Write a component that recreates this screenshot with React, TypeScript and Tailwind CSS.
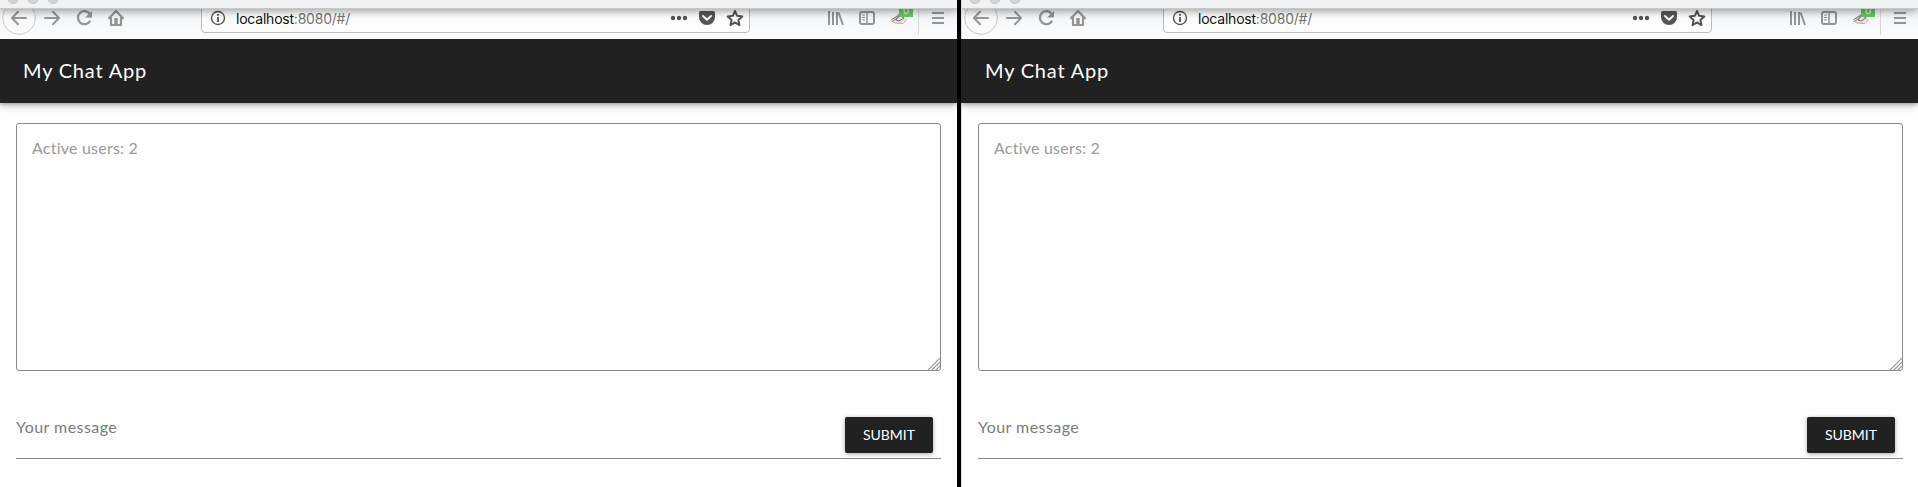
import React from "react";

const glyph = "block shrink-0";

function Toolbar() {
  return (
    <div className="relative h-[39px] w-full shrink-0 overflow-hidden bg-linear-to-b from-[#eff2f4] to-[#fbfcfd]">
      <div className="relative z-10 flex h-[9px] w-full gap-[8px] border-b border-[#c6c8c9] bg-[#f0f2f4] pl-[7px] shadow-[0_2px_8px_rgba(0,0,0,0.4)]">
        <i className="-mt-[8px] block size-[12px] rounded-full border border-[#c4c4c4] bg-[#d5d5d5]" />
        <i className="-mt-[8px] block size-[12px] rounded-full border border-[#c4c4c4] bg-[#d5d5d5]" />
        <i className="-mt-[8px] block size-[12px] rounded-full border border-[#c4c4c4] bg-[#d5d5d5]" />
      </div>
      <div className="-mt-[9px] flex h-[39px] w-[957px]">
        <svg className={glyph} width="201" height="39" viewBox="0 0 201 39" fill="none" stroke="#959595" strokeWidth="2" strokeLinecap="round" strokeLinejoin="round">
          <circle cx="19" cy="18" r="16.3" fill="#fafafa" stroke="#c9c9c9" strokeWidth="1" />
          <path d="M26 18H12.500M18 11.800L12 18l6 6.200M45 18h13.500M53 11.800l6 6.200-6 6.200" />
          <path d="M90 14.300a6.500 6.500 0 1 0 .2 6.400" strokeLinecap="butt" strokeWidth="2.300" />
          <path d="M92 11v6.500h-7z" fill="#959595" stroke="none" />
          <path d="M109 18.300L116 11l7 7.300M111 17v8h10v-8" strokeWidth="2.200" />
          <path d="M116 18v6" strokeWidth="3.500" strokeLinecap="butt" />
        </svg>
        <div className="flex h-[33px] w-[549px] shrink-0 items-center rounded-[4px] border border-[#bcbcbc] bg-[#fdfdfd]">
          <svg className={glyph} width="33" height="33" viewBox="202 0 33 33" fill="none" stroke="#4b4b4b">
            <circle cx="218" cy="18" r="6.500" strokeWidth="1.300" />
            <path d="M218 17v5M218 14v1.700" strokeWidth="1.700" />
          </svg>
          <span className="mt-[5px] w-[430px] pl-px font-['Inter',sans-serif] text-[14px] leading-[18px] tracking-[-0.22px] text-[#737373]"><span className="text-[#111]">localhost</span>:8080/#/</span>
          <svg className={glyph} width="84" height="33" viewBox="665 0 84 33" fill="#555">
            <circle cx="673" cy="18" r="2.200" /><circle cx="679" cy="18" r="2.200" /><circle cx="685" cy="18" r="2.200" />
            <path d="M700.500 11h13q1.500 0 1.500 1.500v4.500a8 8 0 0 1-16 0v-4.500q0-1.500 1.500-1.500z" />
            <path d="M703 16l4 3.700 4-3.700" fill="none" stroke="#fff" strokeWidth="2" strokeLinecap="round" strokeLinejoin="round" />
            <path d="M735 11l2.100 4.800 5.200.6-3.900 3.500 1.100 5.200-4.500-2.700-4.500 2.700 1.100-5.200-3.900-3.500 5.200-.6z" fill="none" stroke="#555" strokeWidth="2" strokeLinejoin="round" />
          </svg>
        </div>
        <svg className={glyph} width="207" height="39" viewBox="750 0 207 39" fill="none" stroke="#959595" strokeWidth="2">
          <path d="M829 11v14M833 12v13M837 12v13M838.500 12.500L843 25" />
          <rect x="860" y="12" width="14" height="12" rx="2" />
          <path d="M867 12v12" strokeWidth="1.500" /><path d="M862 15h3M862 17.500h3M862 20h3" strokeWidth="1" />
          <path d="M891 20.500l8-8.500 6 4 1 4-7 4z" fill="#e7e2da" stroke="none" />
          <path d="M891.500 19.500l7-4 3-4M893 21l7-5M896 20l3-5 5 3-5 3z" stroke="#777" strokeWidth="1" />
          <path d="M891 20.500l4 2.500 8 .5 3.500-4" stroke="#d6a77b" strokeWidth="1" />
          <path d="M899 5h14v12h-14z" fill="#65c966" stroke="none" />
          <text x="906" y="14" textAnchor="middle" fill="#edf9ed" stroke="none" fontFamily="Liberation Sans" fontSize="11">0</text>
          <path d="M918.500 8v27" stroke="#d7d7d7" strokeWidth="1" />
          <path d="M932 13h12M932 18h12M932 23h12" />
        </svg>
      </div>
    </div>
  );
}

function ChatWindow() {
  return (
    <section className="flex h-[487px] min-w-0 flex-1 flex-col bg-[#fefefe] font-['Lato',sans-serif]">
      <Toolbar />
      <header className="-ml-px flex h-[64px] shrink-0 items-center bg-[#212121] pb-[2px] pl-[24px] shadow-[0_2px_4px_-1px_rgba(0,0,0,0.3),0_3px_8px_rgba(0,0,0,0.2)]">
        <h1 className="text-[20px] leading-[28px] font-normal tracking-[0.8px] text-white">My Chat App</h1>
      </header>
      <main className="flex w-[941px] flex-col pt-[20px] pl-[16px]">
        <div className="flex h-[248px] flex-col justify-between rounded-[3px] border border-[#8a8a8a] pt-[13px] pl-[15px] text-[16px] leading-[22px] tracking-[0.22px] text-[#999]">
          <p>Active users: 2</p>
          <svg className="self-end" width="12" height="12" viewBox="0 0 12 12" stroke="#999" strokeWidth="1.200"><path d="M0 12L12 0M4 12l8-8M8 12l4-4" /></svg>
        </div>
        <div className="mt-[46px] flex h-[42px] items-start justify-between border-b border-[#8a8a8a] pr-[8px]">
          <span className="-mt-px text-[16px] leading-[22px] tracking-[0.45px] text-[#7c7c7c]">Your message</span>
          <button className="h-[36px] w-[88px] rounded-[2px] bg-[#212121] pb-[2px] text-[14px] text-white shadow-[0_1px_4px_rgba(0,0,0,0.35)]">SUBMIT</button>
        </div>
      </main>
    </section>
  );
}

export default function App() {
  return (
    <div className="flex h-[487px] w-[1918px] overflow-hidden bg-black">
      <div className="flex w-[957px] shrink-0"><ChatWindow /></div>
      <div className="ml-[4px] flex w-[957px] shrink-0 border-l border-[#dedede]"><ChatWindow /></div>
    </div>
  );
}
